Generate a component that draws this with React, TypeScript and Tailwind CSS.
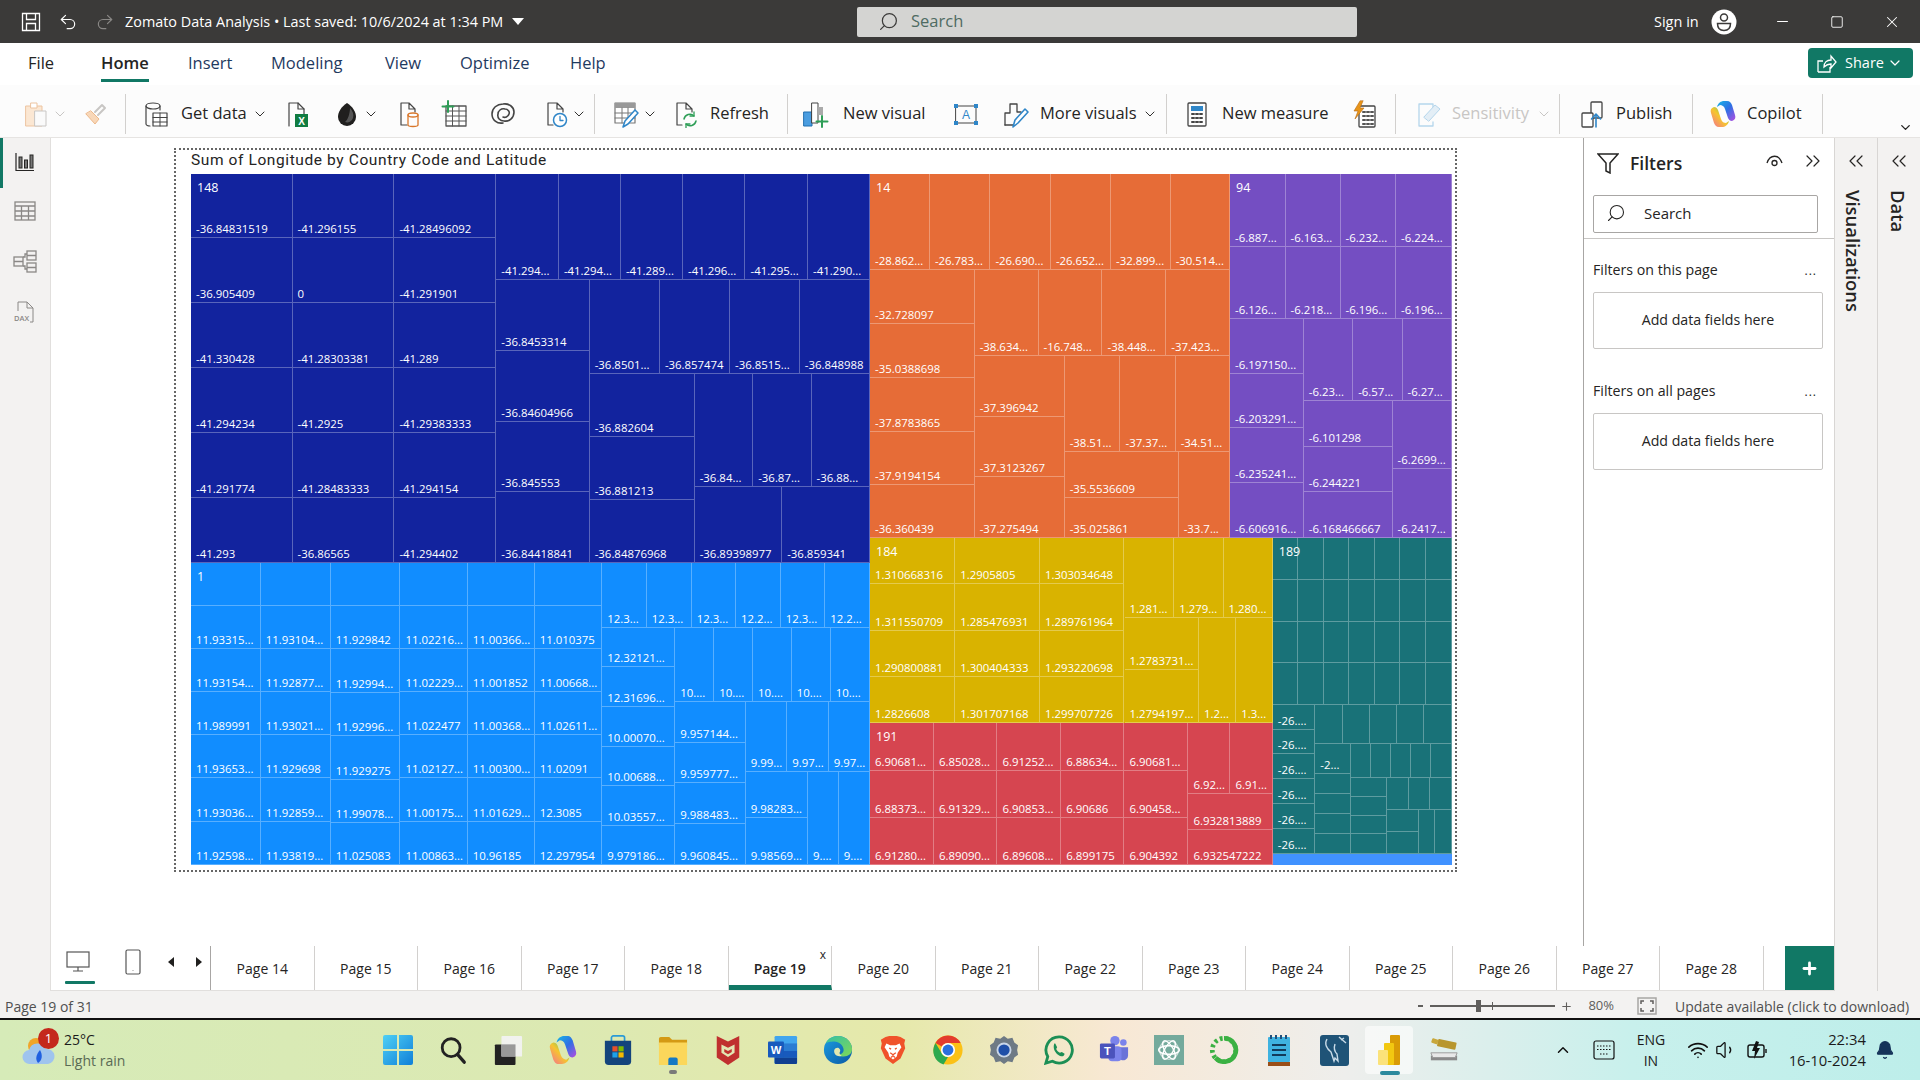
import React from "react";
import { Undo2, Redo2, Search, ChevronDown, ChevronUp, ChevronsLeft, ChevronsRight, Minus, Square, X, Plus, Wifi, Volume1, Bell } from "lucide-react";

type N = { s: number; d?: "row" | "col"; k?: N[]; t?: string; bg?: string; label?: string };
const split = (d: "row" | "col", s: number, edges: number[], labels: string[] = []): N => ({
  s,
  d,
  k: edges.slice(1).map((e, i) => ({ s: e - edges[i], t: labels[i] ?? "" })),
});
const box = (d: "row" | "col", s: number, ...k: N[]): N => ({ s, d, k });
const grp = (n: N, bg: string, label: string): N => ({ ...n, bg, label });

const y1 = [174, 238.3, 303.3, 368.3, 433.3, 498.3, 563.3];
const navy = grp(
  box("row", 389.3,
    box("row", 305.3,
      split("col", 101.5, y1, ["-36.84831519", "-36.905409", "-41.330428", "-41.294234", "-41.291774", "-41.293"]),
      split("col", 101.9, y1, ["-41.296155", "0", "-41.28303381", "-41.2925", "-41.28483333", "-36.86565"]),
      split("col", 101.9, y1, ["-41.28496092", "-41.291901", "-41.289", "-41.29383333", "-41.294154", "-41.294402"])
    ),
    box("col", 373.7,
      split("row", 106, [496, 558.6, 620.6, 682.7, 745.2, 807.7, 870], ["-41.294...", "-41.294...", "-41.289...", "-41.296...", "-41.295...", "-41.290..."]),
      box("row", 283.3,
        split("col", 93.4, [280, 350.7, 421.7, 492.3, 563.3], ["-36.8453314", "-36.84604966", "-36.845553", "-36.84418841"]),
        box("col", 280.3,
          split("row", 94.3, [589.4, 659.6, 729.8, 799.5, 870], ["-36.8501...", "-36.857474", "-36.8515...", "-36.848988"]),
          box("row", 189,
            split("col", 105, [374.3, 437, 500, 563.3], ["-36.882604", "-36.881213", "-36.84876968"]),
            box("col", 175.3,
              split("row", 112.7, [694.4, 752.9, 811.3, 870], ["-36.84...", "-36.87...", "-36.88..."]),
              split("row", 76.3, [694.4, 781.9, 870], ["-36.89398977", "-36.859341"])
            )
          )
        )
      )
    )
  ),
  "bg-[#12239e]", "148"
);
const ly = [563.3, 606, 649.3, 692.3, 735.3, 778.3, 822, 865];
const ly3 = [563.3, 606.3, 649.3, 693.3, 736.3, 779.7, 823, 865];
const sky = grp(
  box("row", 301.7,
    split("col", 69.7, ly, ["", "11.93315...", "11.93154...", "11.989991", "11.93653...", "11.93036...", "11.92598..."]),
    split("col", 70, ly, ["", "11.93104...", "11.92877...", "11.93021...", "11.929698", "11.92859...", "11.93819..."]),
    split("col", 69.7, ly3, ["", "11.929842", "11.92994...", "11.92996...", "11.929275", "11.99078...", "11.025083"]),
    split("col", 67.4, ly, ["", "11.02216...", "11.02229...", "11.022477", "11.02127...", "11.00175...", "11.00863..."]),
    split("col", 67, ly, ["", "11.00366...", "11.001852", "11.00368...", "11.00300...", "11.01629...", "10.96185"]),
    split("col", 67.4, ly, ["", "11.010375", "11.00668...", "11.02611...", "11.02091", "12.3085", "12.297954"]),
    box("col", 267.8,
      split("row", 64.7, [601.9, 646.5, 691.6, 735.8, 780.5, 825.1, 869.7], ["12.3...", "12.3...", "12.3...", "12.2...", "12.3...", "12.2..."]),
      box("row", 237,
        split("col", 73.2, [628, 667.3, 707.3, 746.7, 786.3, 825.7, 865], ["12.32121...", "12.31696...", "10.00070...", "10.00688...", "10.03557...", "9.979186..."]),
        box("col", 194.6,
          split("row", 74.3, [675.1, 713.9, 752.8, 791.6, 830.4, 869.7], ["10....", "10....", "10....", "10....", "10...."]),
          box("row", 162.7,
            split("col", 70.5, [702.3, 742.7, 783.3, 824.3, 865], ["9.957144...", "9.959777...", "9.988483...", "9.960845..."]),
            box("col", 124.1,
              split("row", 69.4, [745.6, 787.1, 828.6, 869.7], ["9.99...", "9.97...", "9.97..."]),
              box("row", 93.3,
                split("col", 62.1, [771.7, 818.3, 865], ["9.98283...", "9.98569..."]),
                split("row", 62, [807.7, 838.5, 869.7], ["9....", "9...."])
              )
            )
          )
        )
      )
    )
  ),
  "bg-[#118dff]", "1"
);
const orange = grp(
  box("col", 360,
    split("row", 96, [869.7, 929.6, 990.1, 1050.6, 1110.7, 1170.4, 1229.7], ["-28.862...", "-26.783...", "-26.690...", "-26.652...", "-32.899...", "-30.514..."]),
    box("row", 267.7,
      split("col", 104.7, [270, 324.3, 378.3, 432, 485, 537.7], ["-32.728097", "-35.0388698", "-37.8783865", "-37.9194154", "-36.360439"]),
      box("col", 255.3,
        split("row", 86, [974.4, 1038.3, 1102.2, 1166, 1229.7], ["-38.634...", "-16.748...", "-38.448...", "-37.423..."]),
        box("row", 181.7,
          split("col", 90, [356, 416.7, 477.3, 537.7], ["-37.396942", "-37.3123267", "-37.275494"]),
          box("col", 165.3,
            split("row", 96.3, [1064.4, 1120.2, 1175.4, 1229.7], ["-38.51...", "-37.37...", "-34.51..."]),
            box("row", 85.4,
              split("col", 114, [452.3, 498.3, 537.7], ["-35.5536609", "-35.025861"]),
              split("col", 51.3, [452.3, 537.7], ["-33.7..."])
            )
          )
        )
      )
    )
  ),
  "bg-[#e66c37]", "14"
);
const pc = [1229.7, 1285.2, 1340.3, 1395.8, 1451.3];
const purple = grp(
  box("col", 221.6,
    split("row", 72.7, pc, ["-6.887...", "-6.163...", "-6.232...", "-6.224..."]),
    split("row", 72.6, pc, ["-6.126...", "-6.218...", "-6.196...", "-6.196..."]),
    box("row", 218.4,
      split("col", 73.8, [319.3, 374.3, 428.3, 483.3, 537.7], ["-6.197150...", "-6.203291...", "-6.235241...", "-6.606916..."]),
      box("col", 147.8,
        split("row", 82, [1303.5, 1352.9, 1402.3, 1451.3], ["-6.23...", "-6.57...", "-6.27..."]),
        box("row", 136.4,
          split("col", 88.8, [401.3, 446.7, 492.3, 537.7], ["-6.101298", "-6.244221", "-6.168466667"]),
          split("col", 59, [401.3, 469.3, 537.7], ["-6.2699...", "-6.2417..."])
        )
      )
    )
  ),
  "bg-[#744ec2]", "94"
);
const yr = [537.3, 584, 630.3, 676.3, 722.7];
const yellow = grp(
  box("row", 185.4,
    box("row", 254.5,
      split("col", 85.3, yr, ["1.310668316", "1.311550709", "1.290800881", "1.2826608"]),
      split("col", 84.6, yr, ["1.2905805", "1.285476931", "1.300404333", "1.301707168"]),
      split("col", 84.6, yr, ["1.303034648", "1.289761964", "1.293220698", "1.299707726"])
    ),
    box("col", 148.8,
      split("row", 80, [1123.7, 1173.4, 1222.8, 1272.5], ["1.281...", "1.279...", "1.280..."]),
      box("row", 105.4,
        split("col", 74.6, [617.3, 670, 722.7], ["1.2783731...", "1.2794197..."]),
        split("row", 74.2, [1198.3, 1235.4, 1272.5], ["1.2...", "1.3..."])
      )
    )
  ),
  "bg-[#d9b300]", "184"
);
const rr = [722.7, 770.3, 817.3, 865];
const red = grp(
  box("row", 142.3,
    box("row", 318.4,
      split("col", 63.9, rr, ["6.90681...", "6.88373...", "6.91280..."]),
      split("col", 63.5, rr, ["6.85028...", "6.91329...", "6.89090..."]),
      split("col", 63.9, rr, ["6.91252...", "6.90853...", "6.89608..."]),
      split("col", 63.2, rr, ["6.88634...", "6.90686", "6.899175"]),
      split("col", 63.9, rr, ["6.90681...", "6.90458...", "6.904392"])
    ),
    box("col", 84.9,
      split("row", 71.3, [1187.6, 1229.7, 1272.5], ["6.92...", "6.91..."]),
      split("col", 71, [794, 829.3, 865], ["6.932813889", "6.932547222"])
    )
  ),
  "bg-[#d64550]", "191"
);
const tr = [537.3, 579.3, 621.3, 662.7, 704.3];
const teal = grp(
  box("col", 315.9,
    box("row", 167, ...Array.from({ length: 7 }, () => split("col", 178.8 / 7, tr))),
    box("row", 149,
      split("col", 42.5, [704.3, 729.3, 754, 778.7, 803.3, 828.3, 853.3], ["-26....", "-26....", "-26....", "-26....", "-26....", "-26...."]),
      box("col", 136.3,
        split("row", 39, [1315, 1342.3, 1369.5, 1396.8, 1424, 1451.3]),
        box("row", 110,
          split("col", 35.6, [743.3, 773.7, 793.3, 813.3, 833.3, 853.3], ["-2..."]),
          box("col", 100.7,
            split("row", 34, [1350.6, 1370.7, 1390.8, 1411, 1431.2, 1451.3]),
            box("row", 76,
              split("col", 36.4, [777.3, 796.3, 815.3, 834, 853.3]),
              box("col", 64.3,
                split("row", 32, [1387, 1408.3, 1429.8, 1451.3]),
                box("row", 44,
                  split("col", 32, [809.3, 831.3, 853.3]),
                  split("row", 32.3, [1419, 1435, 1451.3])
                )
              )
            )
          )
        )
      )
    )
  ),
  "bg-[#197278]", "189"
);

function Tile({ n, parent }: { n: N; parent: "row" | "col" }) {
  const size = parent === "row" ? { width: n.s } : { height: n.s };
  if (!n.k) {
    return (
      <div style={size} className="flex-none min-w-0 min-h-0 overflow-hidden flex items-end pl-[5px] pb-[1px] border-r border-b border-white/30 text-white text-[11.4px] leading-[14px] whitespace-nowrap">
        {n.t}
      </div>
    );
  }
  return (
    <div style={size} className={`relative flex-none min-w-0 min-h-0 flex ${n.d === "row" ? "flex-row" : "flex-col"} ${n.bg ?? ""}`}>
      {n.k.map((c, i) => (
        <Tile key={i} n={c} parent={n.d!} />
      ))}
      {n.label && <span className="absolute left-[6px] top-[5px] text-white text-[12.5px] leading-[18px]">{n.label}</span>}
    </div>
  );
}

function Treemap() {
  return (
    <div className="flex h-[691px] w-[1260.6px] flex-none">
      <div className="flex flex-col w-[679px] flex-none">
        <Tile n={navy} parent="col" />
        <Tile n={sky} parent="col" />
      </div>
      <div className="flex flex-col w-[581.6px] flex-none">
        <div className="flex h-[363.7px] flex-none">
          <Tile n={orange} parent="row" />
          <Tile n={purple} parent="row" />
        </div>
        <div className="flex flex-1">
          <div className="flex flex-col w-[402.8px] flex-none">
            <Tile n={yellow} parent="col" />
            <Tile n={red} parent="col" />
          </div>
          <div className="flex flex-col flex-1">
            <Tile n={teal} parent="col" />
            <div className="h-[11.4px] bg-[#4092ff]" />
          </div>
        </div>
      </div>
    </div>
  );
}

/* ribbon icons */
const Svg = ({ children }: { children: React.ReactNode }) => (
  <svg width={28} height={28} viewBox="0 0 28 28" fill="none" strokeLinecap="round" strokeLinejoin="round" className="flex-none">
    {children}
  </svg>
);
const Chev = ({ c = "#323130" }: { c?: string }) => <ChevronDown size={16} color={c} strokeWidth={1.5} className="flex-none" />;

const PasteI = () => (
  <Svg>
    <rect x="3" y="6" width="16" height="20" fill="#fbe7d3" stroke="#edc4a0" />
    <rect x="8" y="3" width="6" height="5" fill="#fff" stroke="#edc4a0" />
    <rect x="12" y="11" width="11" height="15" fill="#fafafa" stroke="#c8c6c4" />
  </Svg>
);
const PainterI = () => (
  <Svg>
    <path d="M4 14l9 10 4-5-8-8z" fill="#f8d7b8" stroke="#edb98b" />
    <path d="M13 12l7-7 3 3-7 7" stroke="#c8c6c4" strokeWidth="2" />
  </Svg>
);
const GetDataI = () => (
  <Svg>
    <ellipse cx="10" cy="6" rx="7" ry="3" stroke="#444" strokeWidth="1.2" />
    <path d="M3 6v18c0 1 2 2 4 2M17 6v4" stroke="#444" strokeWidth="1.2" />
    <rect x="10" y="13" width="14" height="13" fill="#fff" stroke="#444" strokeWidth="1.2" />
    <path d="M10 17.5h14M10 22h14M17 13v13" stroke="#444" />
  </Svg>
);
const ExcelI = () => (
  <Svg>
    <path d="M5 26V3h9l6 6v5" stroke="#444" strokeWidth="1.2" />
    <path d="M14 3v6h6" stroke="#444" strokeWidth="1.2" />
    <rect x="11" y="14" width="13" height="13" fill="#107c41" />
    <text x="17.5" y="24.5" fontSize="10" fill="#fff" textAnchor="middle" fontFamily="Liberation Sans" fontWeight="700">X</text>
  </Svg>
);
const DropI = () => (
  <Svg>
    <path d="M14 3c-6 4-9 9-9 14a9 9 0 0018 0c0-5-3-10-9-14z" fill="#201f1e" />
    <path d="M17 8c3 3 4 7 3 10a6 6 0 01-8 4c3-2 5-9 5-14z" fill="#555" />
  </Svg>
);
const FileCylI = () => (
  <Svg>
    <path d="M6 25V3h8l6 6v3M14 3v6h6M6 25h6" stroke="#444" strokeWidth="1.2" />
    <ellipse cx="18" cy="15" rx="5" ry="2" stroke="#d9772b" strokeWidth="1.3" />
    <path d="M13 15v10c0 2 10 2 10 0V15" stroke="#d9772b" strokeWidth="1.3" />
  </Svg>
);
const TablePlusI = () => (
  <Svg>
    <rect x="5" y="6" width="20" height="20" fill="#fff" stroke="#555" strokeWidth="1.3" />
    <path d="M5 11h20M5 16h20M5 21h20M11.5 6v20M18 6v20" stroke="#555" />
    <path d="M7 1v11M1.5 6.5h11" stroke="#2e9e57" strokeWidth="2" />
  </Svg>
);
const SpiralI = () => (
  <Svg>
    <path d="M14 23c-6 1-11-3-11-9S8 4 14 4c6-1 11 3 11 8 0 6-5 10-10 9-4 0-7-3-6-7 0-3 3-6 7-5 3 0 5 3 4 5-1 3-4 4-6 3" stroke="#444" strokeWidth="1.6" />
  </Svg>
);
const FileClockI = () => (
  <Svg>
    <path d="M5 25V3h9l6 6v3M14 3v6h6M5 25h5" stroke="#444" strokeWidth="1.2" />
    <circle cx="17" cy="20" r="6.5" fill="#fff" stroke="#2f86c8" strokeWidth="1.5" />
    <path d="M17 16.5V20.5h3" stroke="#2f86c8" strokeWidth="1.3" />
  </Svg>
);
const TablePencilI = () => (
  <Svg>
    <rect x="3" y="3" width="20" height="20" fill="#fff" stroke="#777" strokeWidth="1.2" />
    <rect x="3" y="3" width="20" height="5" fill="#999" />
    <path d="M3 13h20M3 18h20M10 8v15M16 8v15" stroke="#777" />
    <path d="M11 27l2-6 10-11 3 3-10 11z" fill="#fff" stroke="#2f86c8" strokeWidth="1.5" />
  </Svg>
);
const RefreshI = () => (
  <Svg>
    <path d="M5 25V3h9l6 6v3M14 3v6h6M5 25h5" stroke="#444" strokeWidth="1.2" />
    <path d="M12 19a6 6 0 0110-3M24 21a6 6 0 01-10 3" stroke="#2e9e57" strokeWidth="1.5" />
    <path d="M22 12v4h-4M14 28v-4h4" stroke="#2e9e57" strokeWidth="1.3" />
  </Svg>
);
const NewVisualI = () => (
  <Svg>
    <rect x="2" y="12" width="8" height="14" fill="#4a9de0" stroke="#1f6fb0" />
    <rect x="10" y="3" width="6" height="20" fill="#fff" stroke="#444" />
    <rect x="16" y="7" width="5" height="8" fill="#aaa" />
    <path d="M20 16v11M14.5 21.5h11" stroke="#2e9e57" strokeWidth="2" />
  </Svg>
);
const TextboxI = () => (
  <Svg>
    <rect x="4" y="6" width="20" height="17" stroke="#444" />
    <rect x="2" y="4" width="4" height="4" fill="#2f86c8" />
    <rect x="22" y="21" width="4" height="4" fill="#2f86c8" />
    <rect x="22" y="4" width="4" height="4" fill="#2f86c8" />
    <rect x="2" y="21" width="4" height="4" fill="#2f86c8" />
    <text x="14" y="19" fontSize="12" fill="#2f86c8" textAnchor="middle" fontFamily="Liberation Sans">A</text>
  </Svg>
);
const MoreVisualsI = () => (
  <Svg>
    <path d="M3 25V13h5V4h7v8h4" stroke="#444" strokeWidth="1.3" />
    <path d="M3 25h8" stroke="#444" strokeWidth="1.3" />
    <path d="M11 27l2-7 10-11 3 3-10 11z" fill="#fff" stroke="#2f86c8" strokeWidth="1.6" />
  </Svg>
);
const CalcI = () => (
  <Svg>
    <rect x="5" y="3" width="18" height="23" rx="1" stroke="#444" strokeWidth="1.3" />
    <rect x="8" y="6" width="12" height="5" fill="#2f86c8" />
    <path d="M9 14h2M13 14h2M17 14h2M9 18h2M13 18h2M17 18h2M9 22h2M13 22h2M17 22h2" stroke="#444" strokeWidth="2" />
  </Svg>
);
const QuickI = () => (
  <Svg>
    <rect x="8" y="6" width="16" height="21" rx="1" fill="#fff" stroke="#444" strokeWidth="1.3" />
    <path d="M12 12h2M16 12h2M20 12h2M12 16h2M16 16h2M20 16h2M12 20h2M16 20h2M20 20h2M12 24h2M16 24h2M20 24h2" stroke="#555" strokeWidth="2" />
    <path d="M9 1L3 11h4l-3 8 9-11H9l3-7z" fill="#e8951a" stroke="#b86a10" strokeWidth=".6" />
  </Svg>
);
const SensI = () => (
  <Svg>
    <path d="M4 4h14v9M4 4v22h14v-4" stroke="#b5d6ec" strokeWidth="1.3" />
    <path d="M9 17l11-12 5 4-11 12z" fill="#e3eef6" stroke="#b5d6ec" />
  </Svg>
);
const PublishI = () => (
  <Svg>
    <rect x="12" y="2" width="11" height="16" rx="1" stroke="#444" strokeWidth="1.3" />
    <rect x="3" y="13" width="11" height="14" rx="1" fill="#fff" stroke="#444" strokeWidth="1.3" />
    <path d="M17 27V15M12.5 19l4.5-5 4.5 5" stroke="#2f86c8" strokeWidth="1.6" />
  </Svg>
);
const CopilotI = ({ s = 28, id = "a" }: { s?: number; id?: string }) => (
  <svg width={s} height={s} viewBox="0 0 28 28" className="flex-none">
    <defs>
      <linearGradient id={`cp1${id}`} x1="0" y1="0" x2="1" y2="1">
        <stop offset="0" stopColor="#18b6e6" />
        <stop offset="0.5" stopColor="#2f6fe4" />
        <stop offset="1" stopColor="#b44ee0" />
      </linearGradient>
      <linearGradient id={`cp2${id}`} x1="0" y1="1" x2="1" y2="0">
        <stop offset="0" stopColor="#f46a9b" />
        <stop offset="0.5" stopColor="#f6c52e" />
        <stop offset="1" stopColor="#2fc77a" />
      </linearGradient>
    </defs>
    <path d="M8 7C9 3 12 1 15 1h3c3 0 4 2 5 4l3 10c1 3 0 5-3 6-2 0-3-1-4-3l-3-9c-1-3-3-4-5-4z" fill={`url(#cp1${id})`} />
    <path d="M20 21c-1 4-4 6-7 6h-3c-3 0-4-2-5-4L2 13c-1-3 0-5 3-6 2 0 3 1 4 3l3 9c1 3 3 4 5 4z" fill={`url(#cp2${id})`} />
  </svg>
);

const Sep = () => <div className="w-px h-[40px] bg-[#d2d0ce] flex-none" />;
const Ico = ({ className, children }: { className: string; children: React.ReactNode }) => (
  <div className={`flex items-center justify-center flex-none ${className}`}>{children}</div>
);

function Ribbon() {
  return (
    <div className="h-[53px] flex items-center pt-[5px] bg-[#fcfcfc] border-b border-[#e6e4e2] text-[16.5px] text-[#252423] flex-none relative">
      <div className="w-[72px] flex items-center pl-[23px] gap-[1px] flex-none"><PasteI /><Chev c="#c8c6c4" /></div>
      <Ico className="w-[48px]"><PainterI /></Ico>
      <div className="w-[5px] flex-none" />
      <Sep />
      <div className="w-[148px] flex items-center pl-[17px] pr-[6px] flex-none"><GetDataI /><span className="ml-[10px]">Get data</span><span className="ml-auto"><Chev /></span></div>
      <Ico className="w-[48px]"><ExcelI /></Ico>
      <div className="w-[64px] flex items-center pl-[11px] flex-none"><DropI /><span className="ml-[2px]"><Chev /></span></div>
      <Ico className="w-[45px]"><FileCylI /></Ico>
      <Ico className="w-[48px]"><TablePlusI /></Ico>
      <Ico className="w-[48px]"><SpiralI /></Ico>
      <div className="w-[67px] flex items-center pl-[16px] flex-none"><FileClockI /><span className="ml-[0px]"><Chev /></span></div>
      <Sep />
      <div className="w-[72px] flex items-center pl-[17px] flex-none"><TablePencilI /><span className="ml-[2px]"><Chev /></span></div>
      <div className="w-[120px] flex items-center pl-[5px] flex-none"><RefreshI /><span className="ml-[10px]">Refresh</span></div>
      <Sep />
      <div className="w-[154px] flex items-center pl-[14px] flex-none"><NewVisualI /><span className="ml-[13px]">New visual</span></div>
      <Ico className="w-[47px]"><TextboxI /></Ico>
      <div className="w-[177px] flex items-center pl-[13px] pr-[8px] flex-none"><MoreVisualsI /><span className="ml-[10px]">More visuals</span><span className="ml-auto"><Chev /></span></div>
      <Sep />
      <div className="w-[174px] flex items-center pl-[16px] flex-none"><CalcI /><span className="ml-[11px]">New measure</span></div>
      <div className="w-[54px] flex items-center pl-[10px] flex-none"><QuickI /></div>
      <Sep />
      <div className="w-[163px] flex items-center pl-[19px] pr-[7px] flex-none text-[#c8c6c4]"><SensI /><span className="ml-[9px]">Sensitivity</span><span className="ml-auto"><Chev c="#c8c6c4" /></span></div>
      <Sep />
      <div className="w-[132px] flex items-center pl-[19px] flex-none"><PublishI /><span className="ml-[9px]">Publish</span></div>
      <Sep />
      <div className="w-[129px] flex items-center pl-[16px] flex-none"><CopilotI id="r" /><span className="ml-[10px]">Copilot</span></div>
      <Sep />
      <div className="absolute right-[7px] bottom-[2px]"><ChevronDown size={15} color="#252423" strokeWidth={2.2} /></div>
    </div>
  );
}

function TitleBar() {
  return (
    <div className="h-[43px] bg-[#3b3a39] flex items-center text-white flex-none">
      <div className="w-[125px] flex items-center pl-[21px] flex-none">
        <svg width="20" height="20" viewBox="0 0 20 20" fill="none" stroke="#fff" strokeWidth="1.3" className="flex-none">
          <path d="M1.5 1.5h17v17h-17zM5.5 1.5v6h9v-6M5.5 18.5v-7h9v7" />
        </svg>
        <Undo2 size={20} color="#fff" strokeWidth={1.4} className="ml-[17px] flex-none" />
        <Redo2 size={20} color="#8a8886" strokeWidth={1.4} className="ml-[17px] flex-none" />
      </div>
      <span className="text-[14.4px] whitespace-nowrap w-[384px] flex-none">Zomato Data Analysis • Last saved: 10/6/2024 at 1:34 PM</span>
      <svg width="12" height="7" viewBox="0 0 12 7" className="flex-none ml-[3px]"><path d="M0 0h12L6 7z" fill="#fff" /></svg>
      <div className="ml-[333px] w-[500px] h-[30px] bg-[#d4d4d2] rounded-[2px] flex items-center pl-[21px] flex-none">
        <Search size={21} color="#3b3a39" strokeWidth={1.4} className="-scale-x-100" />
        <span className="ml-[12px] text-[16.5px] text-[#4f6b62]">Search</span>
      </div>
      <span className="ml-[297px] text-[14.5px] w-[57px] flex-none">Sign in</span>
      <svg width="26" height="26" viewBox="0 0 26 26" className="flex-none">
        <circle cx="13" cy="13" r="12.5" fill="#fff" />
        <circle cx="13" cy="8.5" r="3.5" fill="none" stroke="#3b3a39" strokeWidth="1.5" />
        <path d="M6.5 14.5h13c0 6-3 7-6.5 7s-6.5-1-6.5-7z" fill="none" stroke="#3b3a39" strokeWidth="1.5" />
      </svg>
      <Minus size={17} color="#fff" strokeWidth={1.5} className="ml-[37px] flex-none" />
      <Square size={14} color="#fff" strokeWidth={1.5} className="ml-[39px] flex-none" />
      <X size={18} color="#fff" strokeWidth={1.4} className="ml-[39px] flex-none" />
    </div>
  );
}

function MenuBar() {
  const items = [
    ["File", "ml-[28px] w-[73px]"],
    ["Home", "w-[87px] font-semibold"],
    ["Insert", "w-[83px] text-[#1f3a5f]"],
    ["Modeling", "w-[114px] text-[#1f3a5f]"],
    ["View", "w-[75px] text-[#1f3a5f]"],
    ["Optimize", "w-[110px] text-[#1f3a5f]"],
    ["Help", "w-[60px] text-[#1f3a5f]"],
  ];
  return (
    <div className="h-[42px] bg-white flex items-center text-[16.5px] text-[#252423] flex-none relative">
      {items.map(([t, c]) => (
        <span key={t} className={`flex-none h-full flex items-center pb-[2px] ${c}`}>
          <span className="relative">
            {t}
            {t === "Home" && <span className="absolute left-0 right-0 top-[28px] h-[3px] bg-[#117865]" />}
          </span>
        </span>
      ))}
      <div className="absolute right-[7px] top-[5px] w-[105px] h-[30px] rounded-[4px] bg-[#117865] text-white flex items-center pl-[8px] text-[14.5px]">
        <svg width="22" height="22" viewBox="0 0 22 22" fill="none" stroke="#fff" strokeWidth="1.3" className="flex-none">
          <path d="M2 20h12V15M2 20V9h5M8 15c0-5 3-7 7-7V4l5 6-5 6v-4c-3 0-5 1-7 3z" />
        </svg>
        <span className="ml-[7px]">Share</span>
        <ChevronDown size={16} color="#fff" strokeWidth={1.8} className="ml-[3px]" />
      </div>
    </div>
  );
}

function LeftNav() {
  return (
    <div className="w-[51px] h-full flex-none bg-[#f3f2f1] border-r border-[#e1dfdd] flex flex-col items-center relative">
      <div className="absolute left-0 top-0 w-[3px] h-[50px] bg-[#117865]" />
      <div className="h-[48px] flex items-center justify-center flex-none">
        <svg width="20" height="20" viewBox="0 0 20 20" fill="none" className="flex-none">
          <path d="M1 1v17.5h18" stroke="#252423" strokeWidth="1.2" />
          <rect x="4" y="5" width="3" height="11" fill="#777" stroke="#252423" />
          <rect x="9.5" y="8" width="3" height="8" fill="#777" stroke="#252423" />
          <rect x="15" y="3" width="3" height="13" fill="#777" stroke="#252423" />
        </svg>
      </div>
      <div className="h-[49px] flex items-center justify-center flex-none">
        <svg width="22" height="20" viewBox="0 0 22 20" fill="none" stroke="#8a8886" className="flex-none" strokeWidth="1.3">
          <rect x="1" y="1" width="20" height="18" />
          <path d="M1 5h20M1 10h20M1 15h20M7.5 5v14M14.5 5v14" />
        </svg>
      </div>
      <div className="h-[51px] flex items-center justify-center flex-none">
        <svg width="24" height="24" viewBox="0 0 24 24" fill="none" stroke="#8a8886" className="flex-none" strokeWidth="1.3">
          <rect x="1" y="8" width="9" height="9" />
          <rect x="14" y="2" width="9" height="9" />
          <rect x="14" y="14" width="9" height="9" />
          <path d="M1 12.5h9M14 6.5h9M14 18.5h9M10 8h2V5h2M10 17h2v3h2" />
        </svg>
      </div>
      <div className="h-[51px] flex items-center justify-center flex-none">
        <svg width="24" height="24" viewBox="0 0 24 24" fill="none" stroke="#8a8886" className="flex-none" strokeWidth="1">
          <path d="M5 11V2h9l6 6v14h-3M14 2v6h6" />
          <text x="1" y="21" fontSize="7.5" fill="#8a8886" stroke="none" fontFamily="Open Sans" fontWeight="600">DAX</text>
        </svg>
      </div>
    </div>
  );
}

function FiltersPane() {
  const Box = () => (
    <div className="ml-[9px] w-[230px] h-[57px] pb-[2px] border border-[#c8c6c4] rounded-[2px] flex items-center justify-center text-[14.2px] text-[#252423] flex-none">Add data fields here</div>
  );
  const Head = ({ t }: { t: string }) => (
    <div className="ml-[9px] w-[228px] flex items-center justify-between text-[14.2px] text-[#252423] h-[20px] flex-none">
      <span>{t}</span>
      <span className="tracking-[1px] text-[12px] pr-[4px] relative top-[1px]">...</span>
    </div>
  );
  return (
    <div className="w-[251px] h-full flex-none border-l border-[#a8a6a4] bg-white flex flex-col">
      <div className="h-[57px] flex items-center pb-[6px] flex-none">
        <svg width="22" height="21" viewBox="0 0 22 21" fill="none" stroke="#252423" strokeWidth="1.5" className="ml-[13px] flex-none">
          <path d="M1 1h20l-8 9v10l-4-2v-8z" />
        </svg>
        <span className="ml-[11px] text-[17.5px] font-semibold text-[#252423]">Filters</span>
        <svg width="17" height="12" viewBox="0 0 17 12" fill="none" stroke="#252423" strokeWidth="1.3" className="ml-[84px] flex-none relative -top-[3px]">
          <path d="M1 8c3-9 12-9 15 0" />
          <circle cx="8.5" cy="8" r="2.5" />
        </svg>
        <ChevronsRight size={24} color="#252423" strokeWidth={1.2} className="ml-[18px] flex-none relative -top-[3px]" />
      </div>
      <div className="ml-[9px] w-[225px] h-[38px] pb-[2px] border border-[#a8a6a4] rounded-[2px] flex items-center pl-[12px] flex-none">
        <Search size={20} color="#252423" strokeWidth={1.3} className="-scale-x-100" />
        <span className="ml-[18px] text-[15px] text-[#252423]">Search</span>
      </div>
      <div className="h-[6px] flex-none border-b border-[#c8c6c4]" />
      <div className="h-[21px] flex-none" />
      <Head t="Filters on this page" />
      <div className="h-[12px] flex-none" />
      <Box />
      <div className="h-[32px] flex-none" />
      <Head t="Filters on all pages" />
      <div className="h-[12px] flex-none" />
      <Box />
    </div>
  );
}

function SidePanes() {
  return (
    <div className="flex h-full flex-none">
      <div className="w-[44px] bg-[#f3f2f1] border-l border-r border-[#d8d6d4] flex flex-col items-center pt-[11px]">
        <ChevronsLeft size={24} color="#252423" strokeWidth={1.2} className="flex-none" />
        <span className="mt-[17px] mr-[6px] [writing-mode:vertical-rl] text-[18.4px] font-semibold text-[#252423] leading-[22px] whitespace-nowrap">Visualizations</span>
      </div>
      <div className="w-[43px] bg-[#f3f2f1] flex flex-col items-center pt-[11px] pr-[1px]">
        <ChevronsLeft size={24} color="#252423" strokeWidth={1.2} className="flex-none" />
        <span className="mt-[17px] mr-[2px] [writing-mode:vertical-rl] text-[18.4px] font-semibold text-[#252423] leading-[22px]">Data</span>
      </div>
    </div>
  );
}

function Tabs() {
  const pages = [14, 15, 16, 17, 18, 19, 20, 21, 22, 23, 24, 25, 26, 27, 28];
  return (
    <div className="h-[45px] flex-none bg-white border-b border-[#e1dfdd] flex">
      <div className="w-[160px] flex-none h-full relative flex items-center border-r border-[#a8a6a4]">
        <svg width="24" height="24" viewBox="0 0 24 24" fill="none" stroke="#555" strokeWidth="1.2" className="ml-[15px] flex-none relative -top-[6px]">
          <rect x="1" y="2" width="22" height="15" />
          <path d="M12 17v4M7 21h10" />
        </svg>
        <svg width="16" height="26" viewBox="0 0 16 26" fill="none" stroke="#555" strokeWidth="1.2" className="ml-[35px] flex-none relative -top-[6px]">
          <rect x="1" y="1" width="14" height="24" rx="1.5" />
          <path d="M8 21v.5" />
        </svg>
        <svg width="6" height="10" viewBox="0 0 6 10" className="ml-[27px] flex-none relative -top-[6px]"><path d="M6 0v10L0 5z" fill="#201f1e" /></svg>
        <svg width="6" height="10" viewBox="0 0 6 10" className="ml-[22px] flex-none relative -top-[6px]"><path d="M0 0v10l6-5z" fill="#201f1e" /></svg>
        <div className="absolute left-[14px] top-[35px] w-[30px] h-[3px] rounded-[1px] bg-[#117865]" />
      </div>
      {pages.map((p) => (
        <div key={p} className={`w-[103.5px] flex-none h-full flex items-center justify-center border-r border-[#d2d0ce] text-[14px] text-[#252423] relative ${p === 19 ? "font-semibold border-b-[5px] border-b-[#117865] pt-[5px]" : ""}`}>
          Page {p}
          {p === 19 && <span className="absolute right-[5px] top-[1px] text-[12px] font-normal leading-[16px]">x</span>}
        </div>
      ))}
      <div className="w-[21px] flex-none" />
      <div className="w-[49px] flex-none h-full bg-[#117865] flex items-center justify-center">
        <Plus size={19} color="#fff" strokeWidth={3.5} />
      </div>
    </div>
  );
}

function StatusBar() {
  return (
    <div className="h-[29px] flex-none bg-[#f3f2f1] border-b-2 border-[#111] flex items-center pt-[3px] text-[14px] text-[#505050]">
      <span className="ml-[5px]">Page 19 of 31</span>
      <div className="ml-auto flex items-center">
        <span className="w-[5px] h-[2px] bg-[#605e5c]" />
        <div className="ml-[7px] w-[125px] h-[2px] bg-[#605e5c] relative">
          <span className="absolute left-[46px] -top-[5px] w-[5px] h-[12px] bg-[#605e5c]" />
          <span className="absolute left-[62px] -top-[3px] w-px h-[8px] bg-[#605e5c]" />
        </div>
        <Plus size={13} color="#605e5c" strokeWidth={2} className="ml-[4.5px]" />
        <span className="ml-[15.5px] text-[13px] text-[#605e5c]">80%</span>
        <svg width="20" height="20" viewBox="0 0 20 20" fill="none" stroke="#605e5c" strokeWidth="1.5" className="ml-[23px] flex-none">
          <rect x="1" y="2" width="18" height="16" stroke="#a8a6a4" />
          <path d="M4 8V5h3M13 5h3v3M4 12v3h3M13 15h3v-3" />
        </svg>
        <span className="ml-[18px] mr-[5px] w-[240px] whitespace-nowrap">Update available (click to download)</span>
      </div>
    </div>
  );
}

/* taskbar icons */
const Tk = ({ children, dot, active }: { children: React.ReactNode; dot?: boolean; active?: boolean }) => (
  <div className="w-[55.1px] h-full flex items-center justify-center flex-none relative">
    {active && <div className="absolute left-[3.5px] top-[6px] w-[48px] h-[48px] rounded-[4px] bg-white/60" />}
    <div className="relative flex items-center justify-center">{children}</div>
    {dot && <div className="absolute left-[24px] top-[50px] w-[8px] h-[4px] rounded-full bg-[#7a7a7a]" />}
    {active && <div className="absolute left-[18px] top-[51px] w-[20px] h-[4px] rounded-full bg-[#2b8a9e]" />}
  </div>
);
const I32 = ({ children }: { children: React.ReactNode }) => (
  <svg width="30" height="30" viewBox="0 0 32 32" fill="none" className="flex-none">{children}</svg>
);
const Taskbar = () => (
  <div className="h-[60px] flex-none flex items-center bg-[linear-gradient(90deg,#d6ebb8_0%,#dce9b2_30%,#e6e9ab_47%,#f8e8d4_58%,#eeeeec_70%,#c8f0ec_85%,#bdeeea_100%)] text-[#1b1b1b]">
    <div className="w-[370px] flex-none h-full flex items-center">
      <div className="relative w-[64px] h-full flex-none">
        <svg width="34" height="34" viewBox="0 0 34 34" className="absolute left-[22px] top-[14px]">
          <circle cx="14" cy="12" r="8" fill="#f0a52a" />
          <path d="M8 30a7 7 0 01-1-14 9 9 0 0117-1 7 7 0 012 15z" fill="#9fc4ee" />
          <path d="M18 16c-4 5-5 9-2 13 4-2 5-8 2-13z" fill="#1f5fe0" />
        </svg>
        <div className="absolute left-[38px] top-[8px] w-[21px] h-[21px] rounded-full bg-[#c4281c] text-white text-[13px] flex items-center justify-center">1</div>
      </div>
      <div className="flex flex-col text-[14px] leading-[21px]">
        <span>25°C</span>
        <span className="text-[#5a6a55]">Light rain</span>
      </div>
    </div>
    <Tk>
      <svg width="30" height="30" viewBox="0 0 30 30" className="flex-none">
        <defs><linearGradient id="st" x1="0" y1="0" x2="1" y2="1"><stop offset="0" stopColor="#4fd0f5" /><stop offset="1" stopColor="#0f7fd8" /></linearGradient></defs>
        <path d="M0 2a2 2 0 012-2h12v14H0zM16 0h12a2 2 0 012 2v12H16zM0 16h14v14H2a2 2 0 01-2-2zM16 16h14v12a2 2 0 01-2 2H16z" fill="url(#st)" />
      </svg>
    </Tk>
    <Tk>
      <I32><circle cx="14" cy="13.5" r="9.5" stroke="#222" strokeWidth="3" /><path d="M21 21l7 8" stroke="#222" strokeWidth="3.5" strokeLinecap="round" /></I32>
    </Tk>
    <Tk>
      <I32>
        <rect x="2" y="10" width="22" height="22" rx="1" fill="#222" />
        <rect x="9" y="1" width="22" height="22" rx="1" fill="#f2f2f2" opacity=".95" />
        <rect x="9" y="10" width="15" height="13" fill="#999" />
      </I32>
    </Tk>
    <Tk><CopilotI s={30} id="t" /></Tk>
    <Tk>
      <I32>
        <path d="M9 7V3a2 2 0 012-2h10a2 2 0 012 2v4" stroke="#2a9ad6" strokeWidth="1.8" />
        <path d="M2 6h28v22a4 4 0 01-4 4H6a4 4 0 01-4-4z" fill="#14447c" />
        <rect x="10" y="12" width="5.5" height="5.5" fill="#e8502a" />
        <rect x="16.5" y="12" width="5.5" height="5.5" fill="#7fba00" />
        <rect x="10" y="18.5" width="5.5" height="5.5" fill="#1ea0e8" />
        <rect x="16.5" y="18.5" width="5.5" height="5.5" fill="#f5b800" />
      </I32>
    </Tk>
    <Tk dot>
      <I32>
        <path d="M1 4a2 2 0 012-2h9l3 3h16v6H1z" fill="#d49a14" />
        <path d="M1 8h30v24H1z" fill="#fbd75b" />
        <path d="M11 26a2 2 0 012-2h6a2 2 0 012 2v6H11z" fill="#1579c4" />
      </I32>
    </Tk>
    <Tk>
      <I32>
        <path d="M4 1l12 6 12-6v23L16 32 4 24z" fill="#c0302f" />
        <path d="M9 10l7 3.5 7-3.5v9l-7 4.5-7-4.5z" fill="#e2e6b4" />
        <path d="M12 15l4 2 4-2v3l-4 2.5-4-2.5z" fill="#c0302f" />
      </I32>
    </Tk>
    <Tk>
      <I32>
        <rect x="7" y="1" width="24" height="30" rx="1.5" fill="#41a5ee" />
        <rect x="7" y="9" width="24" height="8" fill="#2b7cd3" />
        <rect x="7" y="17" width="24" height="7" fill="#185abd" />
        <path d="M7 24h24v5.5a1.5 1.5 0 01-1.5 1.5h-21a1.5 1.5 0 01-1.5-1.5z" fill="#103f91" />
        <rect x="0" y="7" width="17" height="17" rx="1" fill="#185abd" />
        <text x="8.5" y="20" fontSize="12" fill="#fff" fontWeight="700" textAnchor="middle" fontFamily="Liberation Sans">W</text>
      </I32>
    </Tk>
    <Tk>
      <I32>
        <defs>
          <linearGradient id="ed1" x1="0" y1="0" x2="1" y2="1"><stop offset="0" stopColor="#1b9de2" /><stop offset="1" stopColor="#0c59a4" /></linearGradient>
          <linearGradient id="ed2" x1="0" y1="0" x2="1" y2="1"><stop offset="0" stopColor="#35c1a3" /><stop offset="1" stopColor="#7fd858" /></linearGradient>
        </defs>
        <circle cx="16" cy="16" r="15" fill="url(#ed1)" />
        <path d="M3 9C5 4 10 1 16 1c9 0 15 7 15 14 0 5-4 8-9 8-3 0-5-1-6-2 3 0 6-2 6-5 0-5-5-9-10-9-4 0-8 1-9 2z" fill="url(#ed2)" />
        <path d="M12 16c1-2 3-3 5-2 1 1 2 2 1 4-1 1 0 3 2 4-4 2-9-1-8-6z" fill="#e2e8b0" />
      </I32>
    </Tk>
    <Tk>
      <I32>
        <path d="M8 2l4-1h8l4 1 5 3-1 4 1 5-5 11-8 6-8-6L3 14l1-5-1-4z" fill="#f0522a" />
        <path d="M9 9l4 2h6l4-2 2 4-4 6-1 4-4 3-4-3-1-4-4-6z" fill="#fff" />
        <path d="M13 19l3 2 3-2M12 14l2 1M20 14l-2 1M14 24l2-2 2 2" stroke="#f0522a" strokeWidth="1.4" />
      </I32>
    </Tk>
    <Tk>
      <svg width="30" height="30" viewBox="0 0 36 36" className="flex-none">
        <circle cx="18" cy="18" r="17.5" fill="#fbc116" />
        <path d="M18 .5A17.5 17.5 0 0133.2 9.5H18a8.5 8.5 0 00-7.4 4.3L3 9.5A17.5 17.5 0 0118 .5z" fill="#e33b2e" />
        <path d="M3 9.5l7.6 12.8A8.5 8.5 0 0018 26.5l-5.4 9A17.5 17.5 0 013 9.5z" fill="#2da94f" />
        <circle cx="18" cy="18" r="8.5" fill="#fff" />
        <circle cx="18" cy="18" r="6.5" fill="#2a6fdc" />
      </svg>
    </Tk>
    <Tk>
      <I32>
        <path d="M16 1l4 3 5-1 2 5 4 3-1 5 1 5-4 3-2 5-5-1-4 3-4-3-5 1-2-5-4-3 1-5-1-5 4-3 2-5 5 1z" fill="#6e7a85" />
        <circle cx="16" cy="16" r="8" fill="#c9d6e8" />
        <circle cx="16" cy="16" r="6" fill="#1f4fa8" />
      </I32>
    </Tk>
    <Tk>
      <I32>
        <path d="M16 2a14 14 0 00-12 21L2 30l7-2A14 14 0 1016 2z" stroke="#1c8f55" strokeWidth="3" />
        <path d="M11 9c-2 5 1 10 4 12 3 2 6 3 7-1l-3-2-2 1c-2-1-3-2-4-4l1-2-2-4z" fill="#1c8f55" />
      </I32>
    </Tk>
    <Tk>
      <I32>
        <circle cx="26" cy="8" r="3.5" fill="#7b83eb" />
        <path d="M21 13h10v9a5 5 0 01-8 4z" fill="#6b73d8" />
        <circle cx="17" cy="6" r="5" fill="#7b83eb" />
        <rect x="10" y="12" width="14" height="16" rx="4" fill="#7b83eb" />
        <rect x="1" y="9" width="16" height="16" rx="1.5" fill="#4b53bc" />
        <text x="9" y="21.5" fontSize="12" fill="#fff" fontWeight="700" textAnchor="middle" fontFamily="Liberation Sans">T</text>
      </I32>
    </Tk>
    <Tk>
      <I32>
        <rect width="32" height="32" fill="#74aa9c" />
        <g stroke="#fff" strokeWidth="1.5" fill="none">
          <circle cx="16" cy="16" r="10" opacity=".6" />
          <ellipse cx="16" cy="16" rx="11" ry="4.5" transform="rotate(60 16 16)" />
          <ellipse cx="16" cy="16" rx="11" ry="4.5" transform="rotate(-60 16 16)" />
          <ellipse cx="16" cy="16" rx="11" ry="4.5" />
        </g>
      </I32>
    </Tk>
    <Tk>
      <I32>
        <path d="M16 3.5a12.5 12.5 0 11-9 21" stroke="#3bb143" strokeWidth="5" />
        <circle cx="16" cy="16" r="12.5" stroke="#3bb143" strokeWidth="5" strokeDasharray="3 3" />
      </I32>
    </Tk>
    <Tk>
      <svg width="22" height="31" viewBox="0 0 22 31" className="flex-none">
        <rect x="0" y="2" width="22" height="25" rx="1" fill="#3fb2e0" />
        <path d="M3 0v4M8 0v4M13 0v4M18 0v4" stroke="#1f4f7b" strokeWidth="2" />
        <path d="M4 10h14M4 15h14M4 20h14" stroke="#123a5a" strokeWidth="2" />
        <rect x="0" y="27" width="22" height="4" fill="#9a4e18" />
      </svg>
    </Tk>
    <Tk>
      <svg width="29" height="31" viewBox="0 0 29 31" fill="none" className="flex-none">
        <rect width="29" height="31" rx="3" fill="#1f5377" />
        <path d="M7 4c-3 5 0 10 4 13l3 9 1-3 3 3-1-7c-3-3-3-7-2-10M19 2l7 6M21 5l3-2" stroke="#c9dbe8" strokeWidth="1.4" />
      </svg>
    </Tk>
    <Tk active>
      <svg width="22" height="30" viewBox="0 0 22 30" className="flex-none">
        <rect x="12" y="0" width="10" height="30" rx="1" fill="#d99b06" />
        <rect x="6" y="8" width="10" height="22" rx="1" fill="#f2c811" />
        <rect x="0" y="15" width="10" height="15" rx="1" fill="#fbe27a" />
      </svg>
    </Tk>
    <Tk>
      <I32>
        <path d="M2 22h28v5H2z" fill="#8a8a8a" />
        <path d="M2 19h28l-2 5H4z" fill="#e8e8e8" stroke="#999" />
        <rect x="9" y="6" width="20" height="8" rx="1" fill="#b8962e" transform="rotate(12 19 10)" />
        <rect x="3" y="4" width="7" height="5" rx="1" fill="#c9a83c" transform="rotate(20 6 6)" />
      </I32>
    </Tk>
    <div className="w-[82px] flex-none" />
    <ChevronUp size={18} color="#111" strokeWidth={2} className="flex-none" />
    <svg width="22" height="20" viewBox="0 0 22 20" fill="none" stroke="#111" strokeWidth="1.2" className="flex-none ml-[21px]">
      <rect x="1" y="1" width="20" height="18" rx="2" />
      <path d="M4 6h14M4 9.5h14M7 14h8" strokeDasharray="1.5 1.5" />
    </svg>
    <div className="w-[34px] flex-none ml-[19px] flex flex-col items-center text-[14px] leading-[21px]">
      <span>ENG</span>
      <span>IN</span>
    </div>
    <Wifi size={22} color="#111" strokeWidth={1.8} className="flex-none ml-[19px]" />
    <Volume1 size={22} color="#111" strokeWidth={1.4} className="flex-none ml-[6px]" />
    <svg width="22" height="22" viewBox="0 0 22 22" fill="none" stroke="#111" strokeWidth="1.4" className="flex-none ml-[9px]">
      <rect x="2" y="6" width="16" height="12" rx="2" />
      <path d="M20 10v4" />
      <path d="M10 2L6 12h3l-1 8 6-11h-3l2-6z" fill="#111" stroke="none" />
    </svg>
    <div className="w-[88px] flex-none ml-[10px] flex flex-col items-end text-[14.8px] leading-[21px]">
      <span>22:34</span>
      <span>16-10-2024</span>
    </div>
    <Bell size={20} color="#16345a" fill="#16345a" strokeWidth={1.5} className="flex-none ml-[9px]" />
  </div>
);

export default function App() {
  return (
    <div className="w-[1920px] h-[1080px] overflow-hidden flex flex-col bg-white font-['Open_Sans','Noto_Sans',sans-serif]">
      <TitleBar />
      <MenuBar />
      <Ribbon />
      <div className="flex h-[853px] flex-none">
        <LeftNav />
        <div className="w-[1783px] flex-none h-full flex flex-col">
          <div className="h-[808px] flex-none flex">
            <div className="w-[1532px] flex-none flex flex-col">
              <div className="flex flex-col flex-none ml-[123px] mt-[10px] w-[1283px] h-[724px] border-2 border-dotted border-[#666] pl-[15px]">
                <div className="h-[24px] pb-[3px] flex items-center text-[15.5px] text-[#252423] font-['Roboto',sans-serif] tracking-[0.6px] whitespace-nowrap flex-none">Sum of Longitude by Country Code and Latitude</div>
                <Treemap />
              </div>
            </div>
            <FiltersPane />
          </div>
          <Tabs />
        </div>
        <SidePanes />
      </div>
      <StatusBar />
      <Taskbar />
    </div>
  );
}
